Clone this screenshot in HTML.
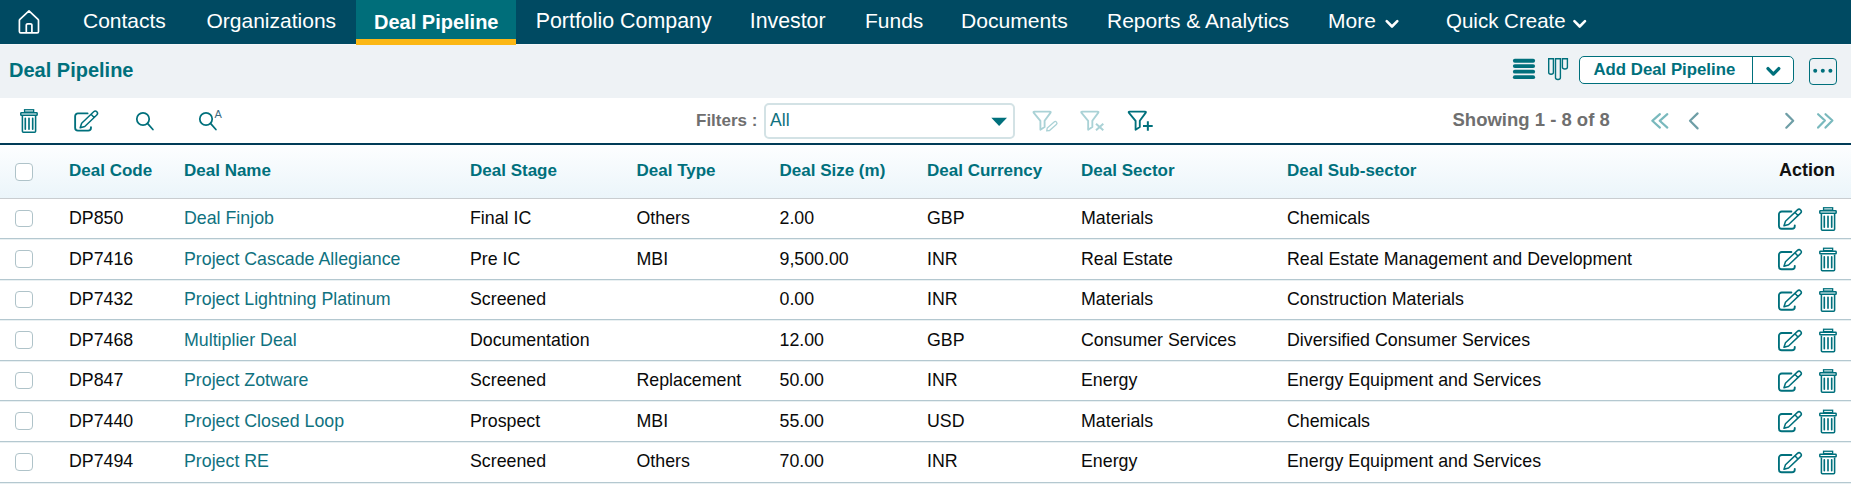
<!DOCTYPE html><html><head><meta charset="utf-8"><style>
*{margin:0;padding:0;box-sizing:border-box}
html,body{width:1851px;height:487px;overflow:hidden;background:#fff;font-family:"Liberation Sans",sans-serif}
.a{position:absolute;white-space:nowrap}
.bg{position:absolute;left:0;width:1851px}
.t{position:absolute;top:-1px;height:44px;line-height:44px;font-size:21px;color:#fff;white-space:nowrap}
.cb{position:absolute;left:15.2px;width:17.8px;height:17.8px;border:1.3px solid #afc3c9;border-radius:4px;background:#fff}
.h{position:absolute;top:143.7px;height:53px;line-height:53px;font-size:17px;font-weight:bold;color:#00707c;white-space:nowrap}
.d{position:absolute;font-size:17.8px;color:#0a0a0a;white-space:nowrap}
.l{color:#10727f}
svg{position:absolute;left:0;top:0}
</style></head><body>
<div class="bg" style="top:0;height:44px;background:#004a62"></div>
<div class="bg" style="top:44px;height:1px;background:#f4f7f9"></div>
<div class="bg" style="top:45px;height:53px;background:#eef2f5"></div>
<div class="a" style="left:356px;top:0;width:160px;height:39px;background:#006e7a"></div>
<div class="a" style="left:356px;top:39px;width:160px;height:6px;background:#fbb715"></div>
<div class="bg" style="top:143px;height:2px;background:#003b57"></div>
<div class="bg" style="top:145px;height:53px;background:linear-gradient(#fdfeff,#ebf5fa)"></div>
<div class="bg" style="top:198px;height:1px;background:#c9cdd0"></div>
<div class="bg" style="top:238px;height:1px;background:#b4c8d0"></div>
<div class="bg" style="top:239px;height:1px;background:#e9f0f2"></div>
<div class="bg" style="top:279px;height:1px;background:#b4c8d0"></div>
<div class="bg" style="top:280px;height:1px;background:#e9f0f2"></div>
<div class="bg" style="top:319px;height:1px;background:#b4c8d0"></div>
<div class="bg" style="top:320px;height:1px;background:#e9f0f2"></div>
<div class="bg" style="top:360px;height:1px;background:#b4c8d0"></div>
<div class="bg" style="top:361px;height:1px;background:#e9f0f2"></div>
<div class="bg" style="top:400px;height:1px;background:#b4c8d0"></div>
<div class="bg" style="top:401px;height:1px;background:#e9f0f2"></div>
<div class="bg" style="top:441px;height:1px;background:#b4c8d0"></div>
<div class="bg" style="top:442px;height:1px;background:#e9f0f2"></div>
<div class="bg" style="top:482px;height:1px;background:#b4c8d0"></div>
<div class="bg" style="top:483px;height:1px;background:#e9f0f2"></div>
<div class="t" style="left:83px;">Contacts</div>
<div class="t" style="left:206.5px;">Organizations</div>
<div class="t" style="left:374px;font-weight:bold;font-size:20px;top:0">Deal Pipeline</div>
<div class="t" style="left:535.7px;font-size:21.4px">Portfolio Company</div>
<div class="t" style="left:749.8px;font-size:21.3px">Investor</div>
<div class="t" style="left:865px;">Funds</div>
<div class="t" style="left:961px;font-size:21.1px">Documents</div>
<div class="t" style="left:1107px;">Reports &amp; Analytics</div>
<div class="t" style="left:1328px;">More</div>
<div class="t" style="left:1446px;font-size:20.5px">Quick Create</div>
<div class="a" style="left:9px;top:55px;font-size:20px;font-weight:bold;color:#00707c;line-height:30px">Deal Pipeline</div>
<div class="a" style="left:1579px;top:56px;width:215px;height:28px;border:1.5px solid #00707c;border-radius:5px;background:#fff"></div>
<div class="a" style="left:1752px;top:56px;width:1px;height:28px;background:#00707c"></div>
<div class="a" style="left:1593.5px;top:56px;height:28px;line-height:28px;font-size:16.8px;font-weight:bold;color:#00707c">Add Deal Pipeline</div>
<div class="a" style="left:1809.3px;top:57.6px;width:27.5px;height:27px;border:1.5px solid #00707c;border-radius:4px"></div>
<div class="a" style="left:696px;top:105.5px;line-height:30px;font-size:17px;font-weight:bold;color:#6f6f6f">Filters :</div>
<div class="a" style="left:763.5px;top:103px;width:251px;height:35.5px;border:2px solid #d3e2e5;border-radius:5px;background:#fff"></div>
<div class="a" style="left:770px;top:105px;line-height:30px;font-size:17.6px;color:#10727f">All</div>
<div class="a" style="left:1452.5px;top:105px;line-height:30px;font-size:18.5px;font-weight:bold;color:#6f6f6f">Showing 1 - 8 of 8</div>
<div class="cb" style="top:163px"></div>
<div class="h" style="left:69px">Deal Code</div>
<div class="h" style="left:184px">Deal Name</div>
<div class="h" style="left:470px">Deal Stage</div>
<div class="h" style="left:636.5px">Deal Type</div>
<div class="h" style="left:779.5px">Deal Size (m)</div>
<div class="h" style="left:927px">Deal Currency</div>
<div class="h" style="left:1081px">Deal Sector</div>
<div class="h" style="left:1287px">Deal Sub-sector</div>
<div class="h" style="left:1779px;color:#111;font-size:18px">Action</div>
<div class="cb" style="top:209.6px"></div>
<div class="d" style="left:69px;top:199px;height:39px;line-height:39px">DP850</div>
<div class="d l" style="left:184px;top:199px;height:39px;line-height:39px">Deal Finjob</div>
<div class="d" style="left:470px;top:199px;height:39px;line-height:39px">Final IC</div>
<div class="d" style="left:636.5px;top:199px;height:39px;line-height:39px">Others</div>
<div class="d" style="left:779.5px;top:199px;height:39px;line-height:39px">2.00</div>
<div class="d" style="left:927px;top:199px;height:39px;line-height:39px">GBP</div>
<div class="d" style="left:1081px;top:199px;height:39px;line-height:39px">Materials</div>
<div class="d" style="left:1287px;top:199px;height:39px;line-height:39px">Chemicals</div>
<div class="cb" style="top:250.1px"></div>
<div class="d" style="left:69px;top:239px;height:40px;line-height:40px">DP7416</div>
<div class="d l" style="left:184px;top:239px;height:40px;line-height:40px">Project Cascade Allegiance</div>
<div class="d" style="left:470px;top:239px;height:40px;line-height:40px">Pre IC</div>
<div class="d" style="left:636.5px;top:239px;height:40px;line-height:40px">MBI</div>
<div class="d" style="left:779.5px;top:239px;height:40px;line-height:40px">9,500.00</div>
<div class="d" style="left:927px;top:239px;height:40px;line-height:40px">INR</div>
<div class="d" style="left:1081px;top:239px;height:40px;line-height:40px">Real Estate</div>
<div class="d" style="left:1287px;top:239px;height:40px;line-height:40px">Real Estate Management and Development</div>
<div class="cb" style="top:290.6px"></div>
<div class="d" style="left:69px;top:280px;height:39px;line-height:39px">DP7432</div>
<div class="d l" style="left:184px;top:280px;height:39px;line-height:39px">Project Lightning Platinum</div>
<div class="d" style="left:470px;top:280px;height:39px;line-height:39px">Screened</div>
<div class="d" style="left:779.5px;top:280px;height:39px;line-height:39px">0.00</div>
<div class="d" style="left:927px;top:280px;height:39px;line-height:39px">INR</div>
<div class="d" style="left:1081px;top:280px;height:39px;line-height:39px">Materials</div>
<div class="d" style="left:1287px;top:280px;height:39px;line-height:39px">Construction Materials</div>
<div class="cb" style="top:331.1px"></div>
<div class="d" style="left:69px;top:320px;height:40px;line-height:40px">DP7468</div>
<div class="d l" style="left:184px;top:320px;height:40px;line-height:40px">Multiplier Deal</div>
<div class="d" style="left:470px;top:320px;height:40px;line-height:40px">Documentation</div>
<div class="d" style="left:779.5px;top:320px;height:40px;line-height:40px">12.00</div>
<div class="d" style="left:927px;top:320px;height:40px;line-height:40px">GBP</div>
<div class="d" style="left:1081px;top:320px;height:40px;line-height:40px">Consumer Services</div>
<div class="d" style="left:1287px;top:320px;height:40px;line-height:40px">Diversified Consumer Services</div>
<div class="cb" style="top:371.6px"></div>
<div class="d" style="left:69px;top:361px;height:39px;line-height:39px">DP847</div>
<div class="d l" style="left:184px;top:361px;height:39px;line-height:39px">Project Zotware</div>
<div class="d" style="left:470px;top:361px;height:39px;line-height:39px">Screened</div>
<div class="d" style="left:636.5px;top:361px;height:39px;line-height:39px">Replacement</div>
<div class="d" style="left:779.5px;top:361px;height:39px;line-height:39px">50.00</div>
<div class="d" style="left:927px;top:361px;height:39px;line-height:39px">INR</div>
<div class="d" style="left:1081px;top:361px;height:39px;line-height:39px">Energy</div>
<div class="d" style="left:1287px;top:361px;height:39px;line-height:39px">Energy Equipment and Services</div>
<div class="cb" style="top:412.1px"></div>
<div class="d" style="left:69px;top:401px;height:40px;line-height:40px">DP7440</div>
<div class="d l" style="left:184px;top:401px;height:40px;line-height:40px">Project Closed Loop</div>
<div class="d" style="left:470px;top:401px;height:40px;line-height:40px">Prospect</div>
<div class="d" style="left:636.5px;top:401px;height:40px;line-height:40px">MBI</div>
<div class="d" style="left:779.5px;top:401px;height:40px;line-height:40px">55.00</div>
<div class="d" style="left:927px;top:401px;height:40px;line-height:40px">USD</div>
<div class="d" style="left:1081px;top:401px;height:40px;line-height:40px">Materials</div>
<div class="d" style="left:1287px;top:401px;height:40px;line-height:40px">Chemicals</div>
<div class="cb" style="top:453.1px"></div>
<div class="d" style="left:69px;top:441px;height:40px;line-height:40px">DP7494</div>
<div class="d l" style="left:184px;top:441px;height:40px;line-height:40px">Project RE</div>
<div class="d" style="left:470px;top:441px;height:40px;line-height:40px">Screened</div>
<div class="d" style="left:636.5px;top:441px;height:40px;line-height:40px">Others</div>
<div class="d" style="left:779.5px;top:441px;height:40px;line-height:40px">70.00</div>
<div class="d" style="left:927px;top:441px;height:40px;line-height:40px">INR</div>
<div class="d" style="left:1081px;top:441px;height:40px;line-height:40px">Energy</div>
<div class="d" style="left:1287px;top:441px;height:40px;line-height:40px">Energy Equipment and Services</div>
<svg width="1851" height="487" viewBox="0 0 1851 487"><defs><g id="trash" fill="none" stroke="#00707c">
<rect x="4.55" y="0.75" width="9.1" height="2.3" stroke-width="1.3"/>
<rect x="0.8" y="3.65" width="16.35" height="2.6" rx="0.6" stroke-width="1.5"/>
<path d="M2.4,7 V22.3 a1,1 0 0 0 1,1 H14.6 a1,1 0 0 0 1,-1 V7" stroke-width="1.55"/>
<path d="M5.3,9.2 V20.2 M9,9.2 V20.2 M12.7,9.2 V20.2" stroke-width="1.65" stroke-linecap="round"/>
</g><g id="edit" fill="none" stroke="#00707c" stroke-linecap="round" stroke-linejoin="round">
<path d="M13.6,4.43 H3.93 A2.8,2.8 0 0 0 1.13,7.23 V18.87 A2.8,2.8 0 0 0 3.93,21.67 H14.17 A2.8,2.8 0 0 0 16.97,18.87 V18.2" stroke-width="1.85"/>
<g transform="translate(5.6,19.3) rotate(-43.7)"><path d="M0.8,0 L5,-2.25 H21.6 A2.25,2.25 0 0 1 21.6,2.25 H5 Z M18,-2.25 V2.25" stroke-width="1.5"/></g>
</g><g id="funnel" fill="none" stroke-width="1.85" stroke-linejoin="round">
<path d="M1129.6,111.6 H1145 Q1146.5,111.6 1145.6,112.9 L1139.8,120.8 V127 L1135.6,129.7 V120.8 L1129,112.9 Q1128.1,111.6 1129.6,111.6 Z"/>
</g><g id="search" fill="none" stroke="#00707c" stroke-width="1.75" stroke-linecap="round">
<circle cx="143" cy="119" r="6.2"/><path d="M147.5,123.4 L152.9,129.5"/>
</g></defs><path d="M19.4,20.4 Q19.4,19.8 19.9,19.3 L29,10.9 L38,19.3 Q38.5,19.8 38.5,20.4 V31.4 a1.4,1.4 0 0 1 -1.4,1.4 H20.8 a1.4,1.4 0 0 1 -1.4,-1.4 Z M26.3,32.8 V25.2 a1.4,1.4 0 0 1 1.4,-1.4 H30.5 a1.4,1.4 0 0 1 1.4,1.4 V32.8" fill="none" stroke="#fff" stroke-width="1.7" stroke-linejoin="round"/><path d="M1386.7,21.2 L1392,26.5 L1397.3,21.2" fill="none" stroke="#fff" stroke-width="2.6" stroke-linecap="round" stroke-linejoin="round"/><path d="M1574.4,21.2 L1579.7,26.5 L1585,21.2" fill="none" stroke="#fff" stroke-width="2.6" stroke-linecap="round" stroke-linejoin="round"/><path d="M1514.8,60.75 H1533.2" stroke="#00707c" stroke-width="3.8" stroke-linecap="round"/><path d="M1514.8,66.1 H1533.2" stroke="#00707c" stroke-width="3.8" stroke-linecap="round"/><path d="M1514.8,71.65 H1533.2" stroke="#00707c" stroke-width="3.8" stroke-linecap="round"/><path d="M1514.8,77.2 H1533.2" stroke="#00707c" stroke-width="3.8" stroke-linecap="round"/><g fill="none" stroke="#00707c" stroke-width="1.4">
<path d="M1548.7,58.7 H1553.4 V72.4 Q1553.4,74 1551.05,74.2 Q1548.7,74 1548.7,72.4 Z"/>
<path d="M1555.5,58.7 H1560.4 V77.7 Q1560.4,79.3 1557.95,79.5 Q1555.5,79.3 1555.5,77.7 Z"/>
<path d="M1562.4,58.7 H1567.4 V67.2 Q1567.4,68.8 1564.9,69 Q1562.4,68.8 1562.4,67.2 Z"/>
</g><path d="M1768,68.6 L1773.4,74.1 L1778.8,68.6" fill="none" stroke="#00707c" stroke-width="3.3" stroke-linecap="round" stroke-linejoin="round"/><circle cx="1815.2" cy="70.8" r="2" fill="#00707c"/><circle cx="1822.8" cy="70.8" r="2" fill="#00707c"/><circle cx="1830.4" cy="70.8" r="2" fill="#00707c"/><use href="#trash" transform="translate(20,109)"/><use href="#edit" transform="translate(74,109)"/><use href="#search"/><use href="#search" transform="translate(63,0)"/><text x="214.6" y="118" font-family="Liberation Sans" font-size="11" fill="#3f6a7e">A</text><path d="M991.3,117.8 H1007 L999.15,125.9 Z" fill="#00707c"/><use href="#funnel" stroke="#aad2d6" transform="translate(-95.2,0)"/><g transform="translate(1046.1,131.3) rotate(-41.5)" fill="none" stroke="#aad2d6" stroke-width="1.3"><path d="M0.9,0 L3,-1.7 H12.2 A1.7,1.7 0 0 1 12.2,1.7 H3 Z"/></g><use href="#funnel" stroke="#aad2d6" transform="translate(-47.45,0)"/><path d="M1096,123.7 L1103.3,130.3 M1103.3,123.7 L1096,130.3" stroke="#aad2d6" stroke-width="2"/><use href="#funnel" stroke="#00707c"/><path d="M1143,126.1 H1152.7 M1147.85,121.2 V130.7" stroke="#00707c" stroke-width="2"/><g fill="none" stroke-width="2.2" stroke-linecap="round" stroke-linejoin="round"><path d="M1659.9,114.2 L1652.3,120.8 L1659.9,127.6 M1667.3,114.2 L1659.7,120.8 L1667.3,127.6" stroke="#79b9bd"/><path d="M1697.6,113.4 L1690,120.8 L1697.6,128.4" stroke="#6e9ea6"/><path d="M1786.3,113.9 L1793.2,120.8 L1786.3,127.7" stroke="#6e9ea6"/><path d="M1818.1,114.2 L1824.9,120.5 L1818.1,127.6 M1825.5,114.2 L1832.4,120.5 L1825.5,127.6" stroke="#79b9bd"/></g><use href="#edit" transform="translate(1777.8,207.10)"/><use href="#trash" transform="translate(1819,207.00)"/><use href="#edit" transform="translate(1777.8,247.60)"/><use href="#trash" transform="translate(1819,247.50)"/><use href="#edit" transform="translate(1777.8,288.10)"/><use href="#trash" transform="translate(1819,288.00)"/><use href="#edit" transform="translate(1777.8,328.60)"/><use href="#trash" transform="translate(1819,328.50)"/><use href="#edit" transform="translate(1777.8,369.10)"/><use href="#trash" transform="translate(1819,369.00)"/><use href="#edit" transform="translate(1777.8,409.60)"/><use href="#trash" transform="translate(1819,409.50)"/><use href="#edit" transform="translate(1777.8,450.60)"/><use href="#trash" transform="translate(1819,450.50)"/></svg>
</body></html>
